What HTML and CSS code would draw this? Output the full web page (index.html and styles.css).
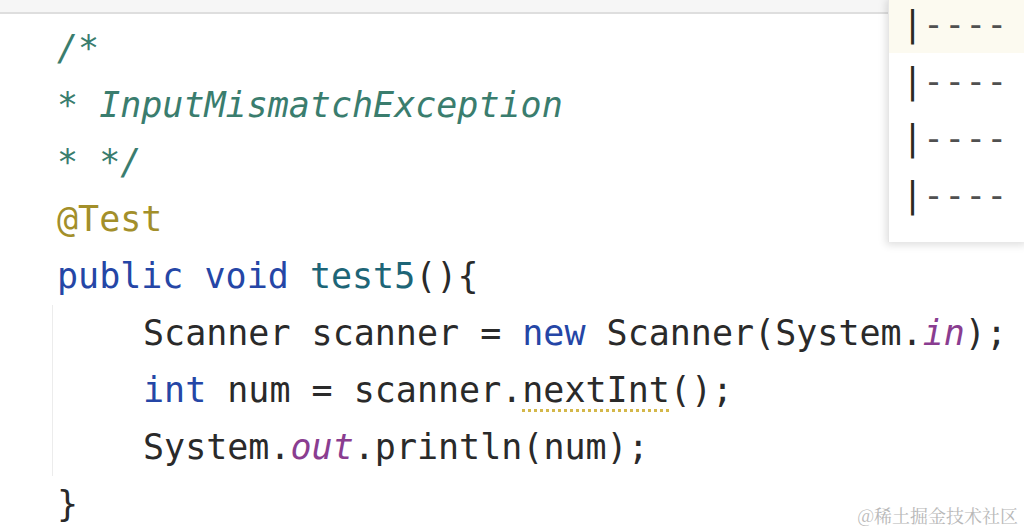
FILE: index.html
```html
<!DOCTYPE html>
<html>
<head>
<meta charset="utf-8">
<link rel="stylesheet" href="styles.css">
</head>
<body>
<div class="topbar"></div>
<div class="code">
  <div class="line cmt">/*</div>
  <div class="line cmt">* InputMismatchException</div>
  <div class="line cmt">* */</div>
  <div class="line ann">@Test</div>
  <div class="line"><span class="kw">public</span> <span class="kw">void</span> <span class="fn">test5</span>(){</div>
  <div class="block">
    <div class="line">Scanner scanner = <span class="kw">new</span> Scanner(System.<span class="st">in</span>);</div>
    <div class="line"><span class="kw">int</span> num = scanner.<span class="warn">nextInt</span>();</div>
    <div class="line">System.<span class="st">out</span>.println(num);</div>
  </div>
  <div class="line">}</div>
</div>
<div class="popup">
  <div class="item sel"><span class="bar">|</span><span class="dash">----</span></div>
  <div class="item"><span class="bar">|</span><span class="dash">----</span></div>
  <div class="item"><span class="bar">|</span><span class="dash">----</span></div>
  <div class="item"><span class="bar">|</span><span class="dash">----</span></div>
</div>
<div class="watermark">@稀土掘金技术社区</div>
</body>
</html>
```
FILE: styles.css
```css
html, body {
  margin: 0;
  padding: 0;
  background: #ffffff;
  width: 1024px;
  height: 532px;
  overflow: hidden;
}
body {
  position: relative;
  font-family: "DejaVu Sans Mono", "Liberation Mono", monospace;
  font-size: 35px;
  color: #2a2a2a;
}
.topbar {
  height: 12px;
  background: #f6f6f6;
  border-bottom: 2px solid #dedede;
}
.code {
  padding-top: 6px;
  padding-left: 52px;
}
.line {
  height: 57px;
  line-height: 57px;
  padding-left: 5px;
  white-space: pre;
}
.block {
  border-left: 1px solid #ececec;
}
.block .line {
  padding-left: 90px;
}
.cmt {
  color: #3a7d6e;
  font-style: italic;
}
.ann {
  color: #a38f2a;
}
.kw {
  color: #2546a6;
}
.fn {
  color: #1d6577;
}
.st {
  color: #8a3d90;
  font-style: italic;
}
.warn {
  text-decoration: underline dotted #d4b84a;
  text-decoration-thickness: 3px;
  text-underline-offset: 7px;
}
.popup {
  position: absolute;
  top: -4px;
  left: 888px;
  width: 140px;
  height: 246px;
  background: #ffffff;
  box-shadow: -2px 3px 8px rgba(0, 0, 0, 0.13);
  border-left: 1px solid #e6e6e6;
}
.item {
  height: 57px;
  line-height: 57px;
  padding-left: 13px;
  white-space: pre;
  color: #555555;
}
.item.sel {
  background: #fcfaf0;
}
.bar {
  color: #2a2a22;
}
.dash {
  color: #505050;
}
.watermark {
  position: absolute;
  right: 6px;
  bottom: 6px;
  font-family: "Noto Serif CJK SC", "Noto Sans CJK SC", sans-serif;
  font-size: 18px;
  line-height: 22px;
  color: #b8b8b8;
}
```
